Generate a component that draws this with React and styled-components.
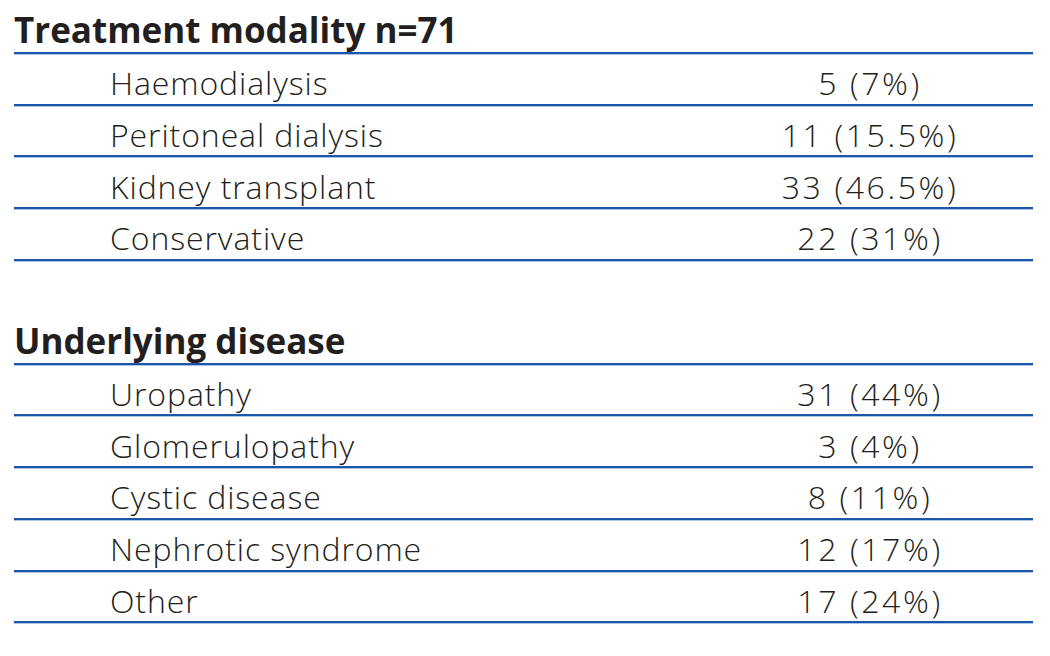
import React from "react";
import styled, { createGlobalStyle } from "styled-components";

const Global = createGlobalStyle`
  html, body { margin: 0; padding: 0; background: #ffffff; }
  body { font-family: "Open Sans", "Noto Sans", sans-serif; color: #231f20; }
`;

const Page = styled.div`
  width: 1050px;
  height: 656px;
  padding: 2px 17px 0 14px;
  box-sizing: border-box;
`;

const Section = styled.section`
  display: flex;
  flex-direction: column;
  margin-bottom: ${(p) => (p.$gap ? "52px" : "0")};
`;

const Heading = styled.div`
  height: 52px;
  box-sizing: border-box;
  display: flex;
  align-items: flex-end;
  padding-bottom: 1px;
  font-size: 35px;
  line-height: 1.2;
  font-weight: 700;
  border-bottom: 2px solid #1a57a8;
  box-shadow: 0 1px 0 #a9c4e6;
`;

const Row = styled.div`
  height: 51.7px;
  box-sizing: border-box;
  display: grid;
  grid-template-columns: 1fr 328px;
  align-items: end;
  padding-bottom: 1px;
  border-bottom: 2px solid #1a57a8;
  box-shadow: 0 1px 0 #a9c4e6;
  font-size: 32px;
  line-height: 1.2;
  font-weight: 300;
`;

const Label = styled.span`
  padding-left: 96px;
  white-space: nowrap;
  letter-spacing: 0.9px;
`;

const Value = styled.span`
  text-align: center;
  white-space: nowrap;
  letter-spacing: 2.6px;
  padding-left: 2px;
`;

const sections = [
  {
    title: "Treatment modality n=71",
    rows: [
      ["Haemodialysis", "5 (7%)"],
      ["Peritoneal dialysis", "11 (15.5%)"],
      ["Kidney transplant", "33 (46.5%)"],
      ["Conservative", "22 (31%)"],
    ],
  },
  {
    title: "Underlying disease",
    rows: [
      ["Uropathy", "31 (44%)"],
      ["Glomerulopathy", "3 (4%)"],
      ["Cystic disease", "8 (11%)"],
      ["Nephrotic syndrome", "12 (17%)"],
      ["Other", "17 (24%)"],
    ],
  },
];

export default function App() {
  return (
    <>
      <Global />
      <Page>
        {sections.map((s, i) => (
          <Section key={s.title} $gap={i === 0}>
            <Heading>{s.title}</Heading>
            {s.rows.map(([l, v]) => (
              <Row key={l}>
                <Label>{l}</Label>
                <Value>{v}</Value>
              </Row>
            ))}
          </Section>
        ))}
      </Page>
    </>
  );
}
